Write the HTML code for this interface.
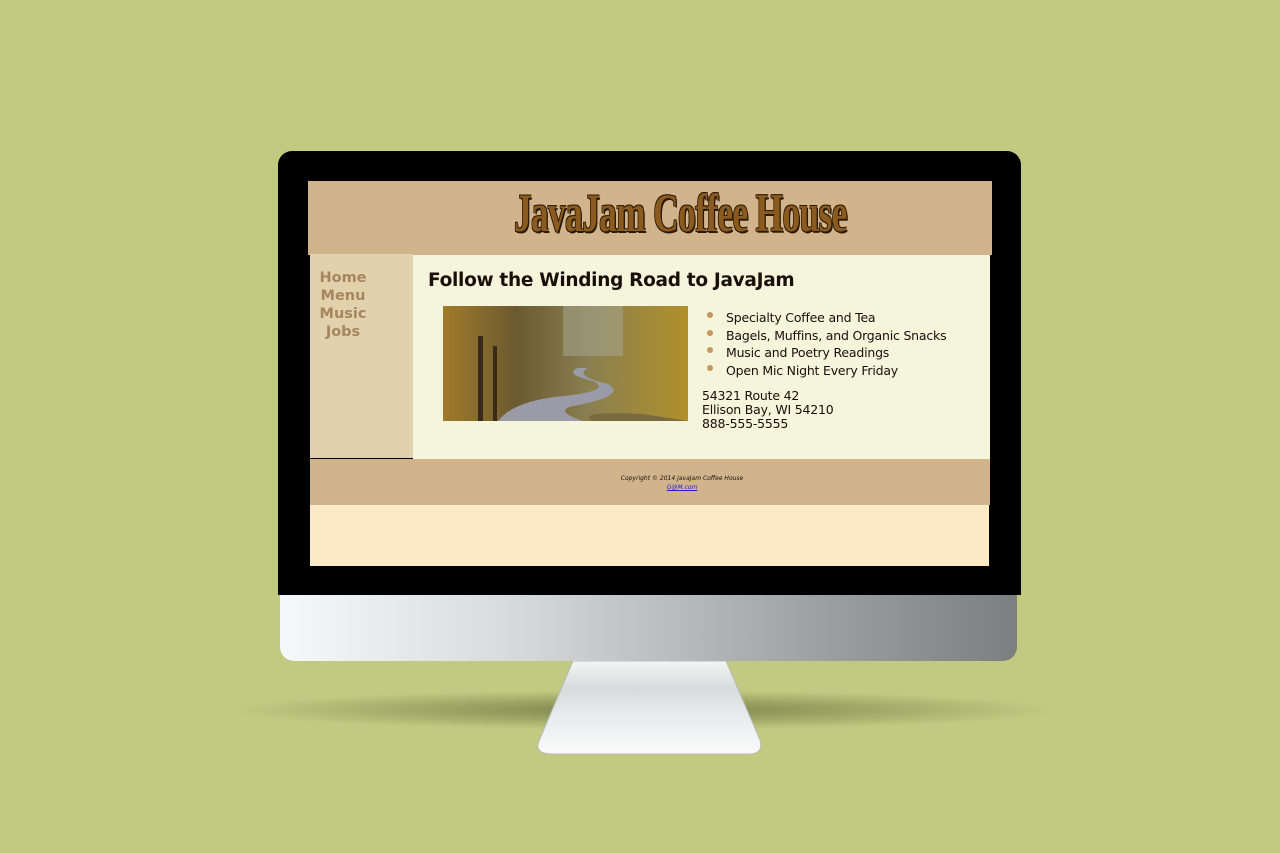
<!DOCTYPE html>
<html><head><meta charset="utf-8"><style>
body{margin:0;width:1280px;height:853px;background:#c2c980;position:relative;overflow:hidden;font-family:"DejaVu Sans","Liberation Sans",sans-serif}
.a{position:absolute}
</style></head><body>
<div class="a" style="left:230px;top:690px;width:830px;height:40px;border-radius:50%;background:radial-gradient(ellipse at center,rgba(60,70,30,.55),rgba(60,70,30,0) 70%)"></div>
<svg class="a" style="left:530px;top:655px" width="240" height="105"><defs><linearGradient id="s" x1="0" y1="0" x2="0" y2="1"><stop offset="0" stop-color="#f4f5f5"/><stop offset=".3" stop-color="#d8dadb"/><stop offset=".6" stop-color="#e9ebec"/><stop offset="1" stop-color="#fafafa"/></linearGradient></defs><path d="M43 6 L196 6 L230 85 Q234 98 220 99 L20 99 Q4 98 9 86 Z" fill="url(#s)" stroke="#b8bbb8" stroke-width="1"/></svg>
<div class="a" style="left:280px;top:590px;width:737px;height:71px;border-radius:0 0 14px 14px;background:linear-gradient(90deg,#f6f8f9 0%,#d9dcdd 30%,#b7babb 55%,#9a9e9f 75%,#7c7f80 100%)"></div>
<div class="a" style="left:278px;top:151px;width:743px;height:444px;background:#000;border-radius:14px 14px 0 0"></div>
<div class="a" style="left:308px;top:181px;width:684px;height:74px;background:#d2b48c"></div>
<div class="a" style="left:514px;top:182px;width:340px;height:62px;font-family:'Liberation Serif',serif;font-size:54px;font-weight:bold;color:#8b5a1e;letter-spacing:-1px;transform:scaleX(.655);transform-origin:left;white-space:nowrap;text-shadow:2px 2px 0 #2a1a08,-1px -1px 0 #2a1a08,1px -1px 0 #2a1a08,-1px 1px 0 #2a1a08">JavaJam Coffee House</div>
<div class="a" style="left:310px;top:254px;width:103px;height:204px;background:#e2d1ad"></div>
<div class="a" style="left:310px;top:269px;width:66px;text-align:center;font-weight:bold;font-size:14.5px;line-height:18px;color:#a6865e">Home<br>Menu<br>Music<br>Jobs</div>
<div class="a" style="left:413px;top:255px;width:577px;height:204px;background:#f5f5dc"></div>
<div class="a" style="left:428px;top:270px;font-weight:bold;font-size:18.5px;color:#1a0e08;letter-spacing:-0.3px">Follow the Winding Road to JavaJam</div>
<svg class="a" style="left:443px;top:306px" width="245" height="115"><defs><linearGradient id="t" x1="0" y1="0" x2="1" y2="0"><stop offset="0" stop-color="#a07a2a"/><stop offset=".3" stop-color="#6b5a30"/><stop offset=".6" stop-color="#8a8050"/><stop offset="1" stop-color="#b0902a"/></linearGradient></defs><rect width="245" height="115" fill="url(#t)"/><rect x="120" y="0" width="60" height="50" fill="#a8a898" opacity=".5"/><path d="M55 115 Q70 95 120 90 Q170 85 150 75 Q120 68 135 62 L145 62 Q130 70 165 78 Q185 90 130 100 Q110 105 140 115 Z" fill="#9a9aa8"/><path d="M150 115 Q130 105 200 108 L245 115Z" fill="#7a6a40"/><rect x="35" y="30" width="5" height="85" fill="#3a2a1a"/><rect x="50" y="40" width="4" height="75" fill="#3a2a1a"/></svg>
<div class="a" style="left:707px;top:309px;font-size:12.5px;line-height:17.5px;color:#1a0e08;letter-spacing:-0.2px">
<div><span style="display:inline-block;width:6px;height:6px;border-radius:50%;background:#c8955a;margin-right:13px;vertical-align:4px"></span>Specialty Coffee and Tea</div>
<div><span style="display:inline-block;width:6px;height:6px;border-radius:50%;background:#c8955a;margin-right:13px;vertical-align:4px"></span>Bagels, Muffins, and Organic Snacks</div>
<div><span style="display:inline-block;width:6px;height:6px;border-radius:50%;background:#c8955a;margin-right:13px;vertical-align:4px"></span>Music and Poetry Readings</div>
<div><span style="display:inline-block;width:6px;height:6px;border-radius:50%;background:#c8955a;margin-right:13px;vertical-align:4px"></span>Open Mic Night Every Friday</div>
</div>
<div class="a" style="left:702px;top:389px;font-size:12.5px;line-height:14px;color:#1a0e08;letter-spacing:-0.2px">54321 Route 42<br>Ellison Bay, WI 54210<br>888-555-5555</div>
<div class="a" style="left:310px;top:459px;width:680px;height:46px;background:#d2b48c"></div>
<div class="a" style="left:310px;top:474px;width:744px;text-align:center;font-size:6px;font-style:italic;line-height:9px;color:#1a0e08">Copyright © 2014 JavaJam Coffee House<br><span style="color:#22c;text-decoration:underline">G@M.com</span></div>
<div class="a" style="left:310px;top:505px;width:679px;height:61px;background:#fdebc8"></div>
</body></html>
